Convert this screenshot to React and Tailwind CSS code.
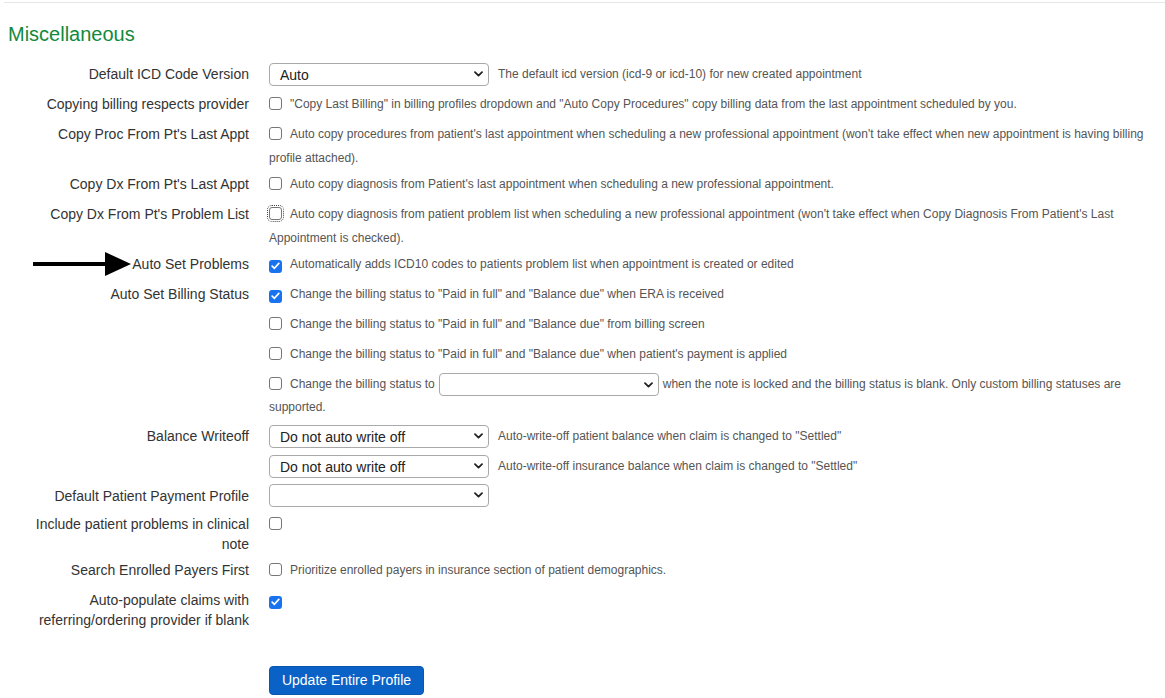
import React from "react";

function Chevron() {
  return (
    <svg width="9" height="6" viewBox="0 0 9 6" className="shrink-0">
      <path d="M1 1.2 L4.5 4.6 L8 1.2" fill="none" stroke="#222" strokeWidth="1.8" strokeLinecap="round" strokeLinejoin="round" />
    </svg>
  );
}

function Select({ value = "", className = "" }) {
  return (
    <span
      className={
        "inline-flex h-[23px] items-center justify-between rounded-[4px] border border-[#a9a9a9] bg-white pl-[10px] pr-[5px] text-[14px] leading-none text-[#222] " +
        className
      }
    >
      <span className="pt-[2px]">{value}</span>
      <Chevron />
    </span>
  );
}

function Box({ checked = false, focus = false }) {
  if (checked) {
    return (
      <span className="mr-[8px] inline-flex h-[13px] w-[13px] items-center justify-center rounded-[3px] bg-[#1a73ee] align-[-2px]">
        <svg width="9" height="8" viewBox="0 0 9 8">
          <path d="M1.2 4.2 L3.4 6.3 L7.8 1.4" fill="none" stroke="#fff" strokeWidth="1.7" strokeLinecap="round" strokeLinejoin="round" />
        </svg>
      </span>
    );
  }
  return (
    <span
      className={
        "mr-[8px] inline-block h-[13px] w-[13px] rounded-[3px] border border-[#767676] bg-white align-[-2px] " +
        (focus ? "outline-1 outline-offset-[1px] outline-dotted outline-[#444]" : "")
      }
    />
  );
}

function Row({ label, h, children, labelExtra = null }) {
  return (
    <div className={"flex " + h}>
      <div className="relative w-[249px] shrink-0 pl-[16px] pt-[5px] text-right text-[14px] leading-5 text-[#333]">
        {labelExtra}
        {label}
      </div>
      <div className="ml-[20px] flex-1 pr-[2px] pt-[3px] text-[12px] leading-6 text-[#555]">{children}</div>
    </div>
  );
}

export default function App() {
  return (
    <div className="min-h-[698px] w-[1165px] bg-white font-['Liberation_Sans',Arial,Helvetica,sans-serif]">
      <div className="ml-[4px] pt-[2px]">
        <div className="h-px bg-[#e6e6e6]" />
      </div>
      <h2 className="ml-[8px] mt-[20px] mb-[14px] text-[20px] leading-[22px] text-[#11893d]">Miscellaneous</h2>

      <div className="flex h-[30px]">
        <div className="w-[249px] shrink-0 pt-[5px] text-right text-[14px] leading-5 text-[#333]">Default ICD Code Version</div>
        <div className="ml-[20px] flex flex-1 items-center text-[12px] text-[#555]">
          <Select value="Auto" className="w-[220px]" />
          <span className="ml-[9px]">The default icd version (icd-9 or icd-10) for new created appointment</span>
        </div>
      </div>

      <Row label="Copying billing respects provider" h="h-[30px]">
        <Box />
        "Copy Last Billing" in billing profiles dropdown and "Auto Copy Procedures" copy billing data from the last appointment scheduled by you.
      </Row>

      <Row label="Copy Proc From Pt's Last Appt" h="h-[50px]">
        <Box />
        Auto copy procedures from patient's last appointment when scheduling a new professional appointment (won't take effect when new appointment is having billing profile attached).
      </Row>

      <Row label="Copy Dx From Pt's Last Appt" h="h-[30px]">
        <Box />
        Auto copy diagnosis from Patient's last appointment when scheduling a new professional appointment.
      </Row>

      <Row label="Copy Dx From Pt's Problem List" h="h-[50px]">
        <Box focus />
        Auto copy diagnosis from patient problem list when scheduling a new professional appointment (won't take effect when Copy Diagnosis From Patient's Last Appointment is checked).
      </Row>

      <Row
        label="Auto Set Problems"
        h="h-[30px]"
        labelExtra={
          <svg className="absolute left-[33px] top-[3px]" width="98" height="24" viewBox="0 0 98 24">
            <rect x="0" y="10" width="76" height="4" fill="#000" />
            <polygon points="72,0 98,12 72,24" fill="#000" />
          </svg>
        }
      >
        <Box checked />
        Automatically adds ICD10 codes to patients problem list when appointment is created or edited
      </Row>

      <Row label="Auto Set Billing Status" h="h-[30px]">
        <Box checked />
        Change the billing status to "Paid in full" and "Balance due" when ERA is received
      </Row>

      <Row label="" h="h-[30px]">
        <Box />
        Change the billing status to "Paid in full" and "Balance due" from billing screen
      </Row>

      <Row label="" h="h-[30px]">
        <Box />
        Change the billing status to "Paid in full" and "Balance due" when patient's payment is applied
      </Row>

      <div className="flex h-[52px]">
        <div className="w-[249px] shrink-0" />
        <div className="ml-[20px] flex-1 pr-[2px] pt-[4px] text-[12px] leading-[23px] text-[#555]">
          <Box />
          <span>Change the billing status to</span>
          <Select className="ml-[4px] mr-[4px] w-[220px] align-middle" />
          <span>when the note is locked and the billing status is blank. Only custom billing statuses are</span>{" "}
          <span>supported.</span>
        </div>
      </div>

      <div className="flex h-[30px]">
        <div className="w-[249px] shrink-0 pt-[5px] text-right text-[14px] leading-5 text-[#333]">Balance Writeoff</div>
        <div className="ml-[20px] flex flex-1 items-center text-[12px] text-[#555]">
          <Select value="Do not auto write off" className="w-[220px]" />
          <span className="ml-[9px]">Auto-write-off patient balance when claim is changed to "Settled"</span>
        </div>
      </div>

      <div className="flex h-[30px]">
        <div className="w-[249px] shrink-0" />
        <div className="ml-[20px] flex flex-1 items-center text-[12px] text-[#555]">
          <Select value="Do not auto write off" className="w-[220px]" />
          <span className="ml-[9px]">Auto-write-off insurance balance when claim is changed to "Settled"</span>
        </div>
      </div>

      <div className="flex h-[28px]">
        <div className="w-[249px] shrink-0 pt-[5px] text-right text-[14px] leading-5 text-[#333]">Default Patient Payment Profile</div>
        <div className="ml-[20px] flex flex-1 items-center text-[12px] text-[#555]">
          <Select className="w-[220px]" />
        </div>
      </div>

      <Row label="Include patient problems in clinical note" h="h-[46px]">
        <Box />
      </Row>

      <Row label="Search Enrolled Payers First" h="h-[30px]">
        <Box />
        Prioritize enrolled payers in insurance section of patient demographics.
      </Row>

      <Row label="Auto-populate claims with referring/ordering provider if blank" h="h-[81px]">
        <Box checked />
      </Row>

      <div className="flex">
        <div className="w-[249px] shrink-0" />
        <button className="ml-[20px] h-[29px] w-[155px] rounded-[4px] border border-[#0955b0] bg-[#0b62c6] text-[14px] text-white">
          Update Entire Profile
        </button>
      </div>
    </div>
  );
}
